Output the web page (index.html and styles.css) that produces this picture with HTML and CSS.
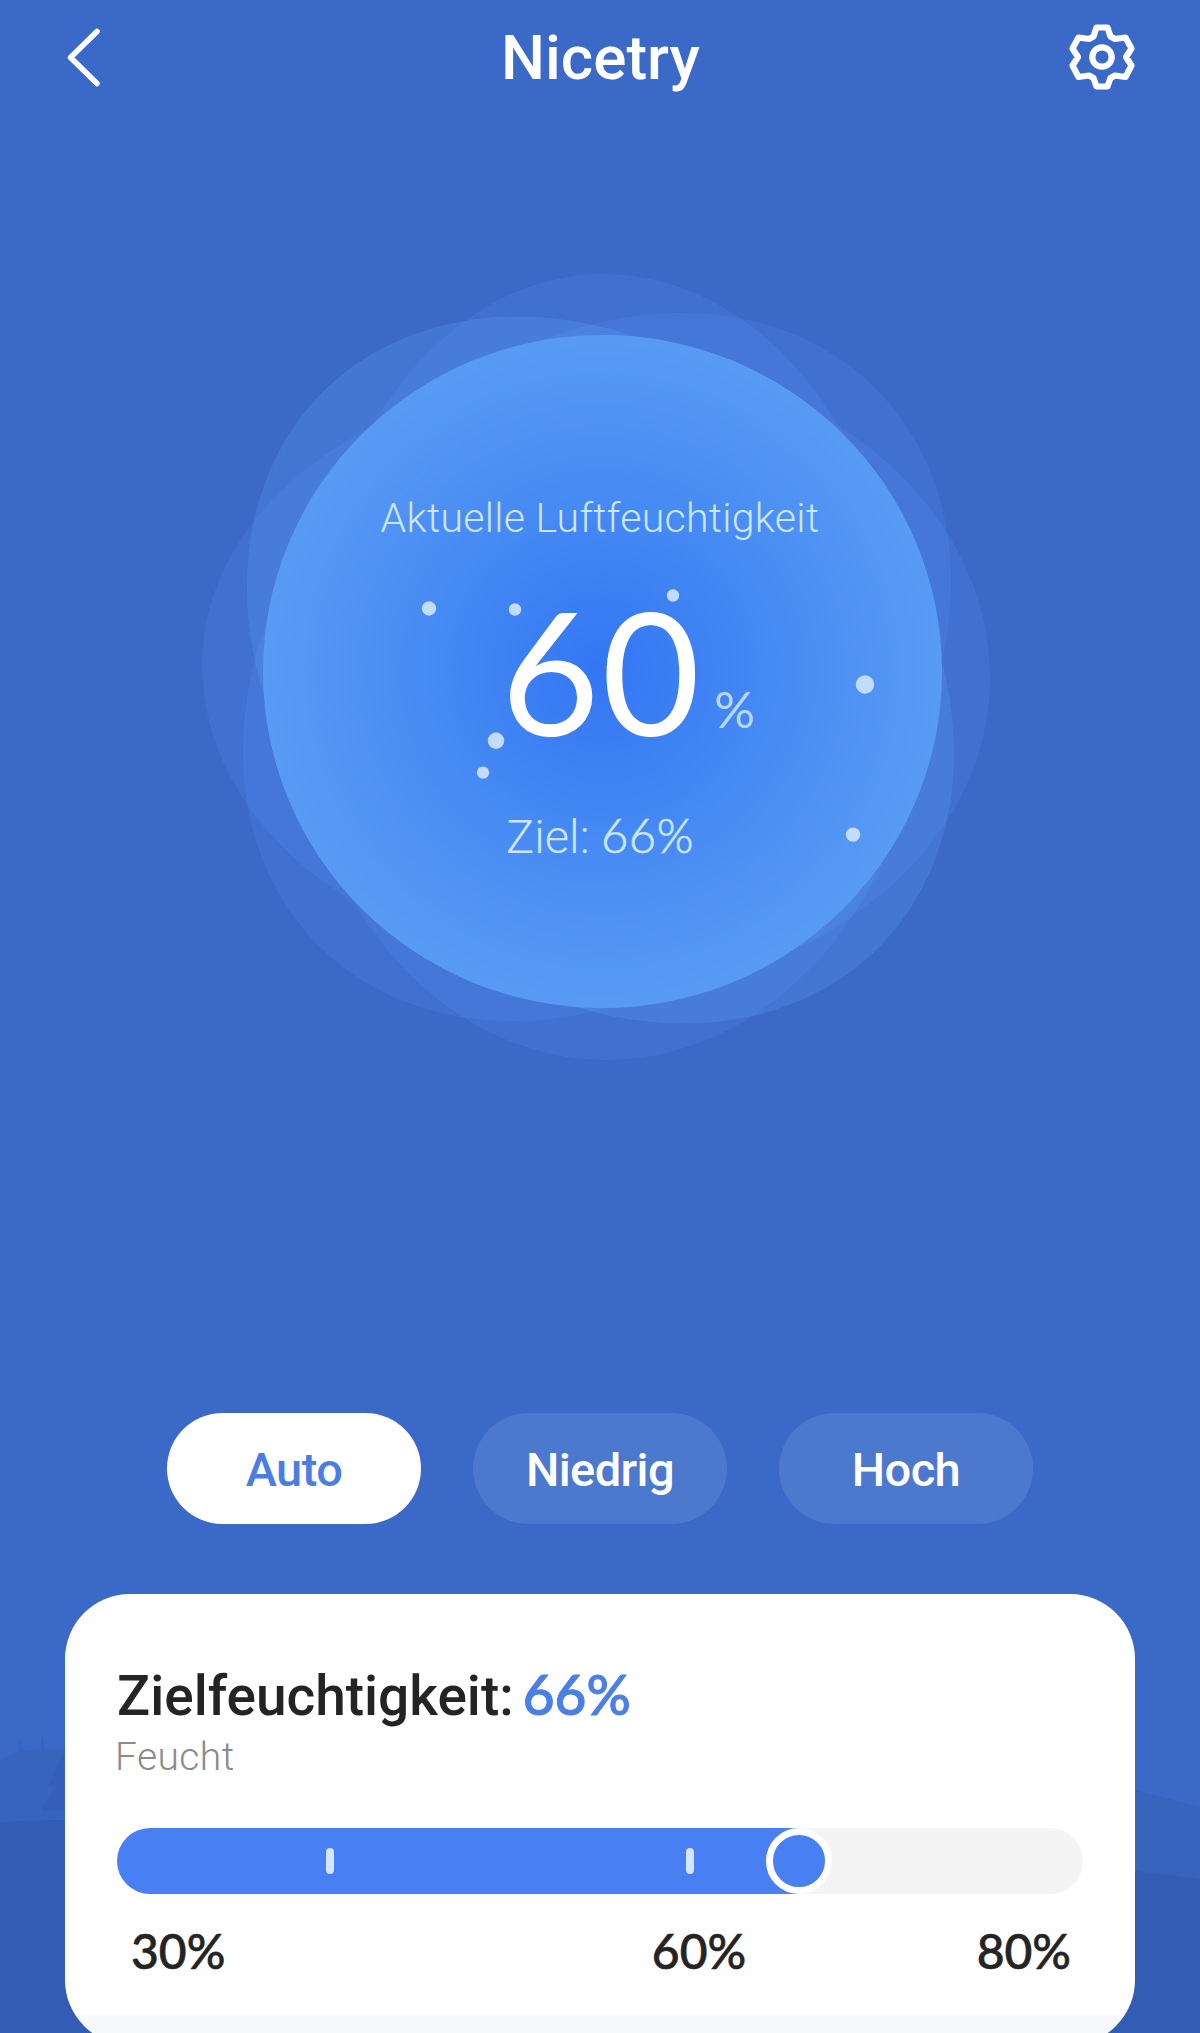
FILE: index.html
```html
<!DOCTYPE html>
<html lang="de">
<head>
<meta charset="utf-8">
<title>Nicetry</title>
<link rel="stylesheet" href="styles.css">
</head>
<body>
<div class="screen">
  <svg class="scenery" viewBox="0 0 1200 320" aria-hidden="true">
    <path fill="#3864be" d="M0 47Q16 40 18 39L20 25L23 38L40 36L42 20L45 36Q70 34 110 42L1100 68L1135 77L1200 94V320H0Z"/>
    <path fill="#355fb8" d="M41 98L54 74H48L60 48L68 30V98Z"/>
    <path fill="#335cb4" d="M0 109Q30 107 65 107L1135 158L1200 166V320H0Z"/>
  </svg>

  <header class="topbar">
    <svg class="back" viewBox="0 0 40 64" aria-label="Zurück"><path d="M36 6.500L9.500 32.500L36 58.500"/></svg>
    <h1 class="title">Nicetry</h1>
    <svg class="gear" viewBox="0 0 72 72" aria-label="Einstellungen">
      <path d="M30.500 6.500H41.500L44.500 15.500L49 18L59.500 16.500L65.500 27.500L60 36L65.500 44.500L59.500 56L49 54.500L44.500 57L41.500 65.500H30.500L27.500 57L23 54.500L12.500 56L6.500 44.500L12 36L6.500 27.500L12.500 16.500L23 18L27.500 15.500Z"/>
      <circle cx="36" cy="36" r="9.700"/>
    </svg>
  </header>

  <section class="dial">
    <svg class="bubble" viewBox="190 260 820 820" aria-hidden="true">
      <defs>
        <radialGradient id="core" gradientUnits="userSpaceOnUse" cx="602" cy="671" r="340">
          <stop offset="0" stop-color="#3376f3"/>
          <stop offset=".5" stop-color="#468af3"/>
          <stop offset="1" stop-color="#589bf4"/>
        </radialGradient>
      </defs>
      <g class="petal">
        <path d="M311 667A292 393 0 0 1 603 274A298 393 0 0 1 901 667H925A319 393 0 0 1 606 1060A315 393 0 0 1 291 667Z"/>
        <path d="M202 664A394 288 0 0 1 596 376V358A394 320 0 0 1 990 678A394 314 0 0 1 596 992V966A394 302 0 0 1 202 664Z"/>
        <ellipse cx="597" cy="667" rx="394" ry="309" transform="rotate(-45 597 667)"/>
      </g>
      <ellipse class="petal-bright" cx="600.500" cy="670" rx="393" ry="309" transform="rotate(45 600.500 670)"/>
      <ellipse cx="602.500" cy="671.500" rx="339.500" ry="336.500" fill="url(#core)"/>
      <g class="drops">
        <circle cx="429" cy="608.500" r="7.200"/><circle cx="515" cy="609.500" r="6.200"/>
        <circle cx="673" cy="595.500" r="6.200"/><circle cx="496" cy="740.700" r="8.200"/>
        <circle cx="483" cy="772.600" r="6.200"/><circle cx="865" cy="684.500" r="9.200"/>
        <circle cx="853" cy="834.600" r="7.200"/>
      </g>
    </svg>
    <p class="caption">Aktuelle Luftfeuchtigkeit</p>
    <p class="reading"><span class="value">60</span><span class="unit">%</span></p>
    <p class="goal">Ziel: <span class="num">66%</span></p>
  </section>

  <nav class="modes">
    <button class="mode active">Auto</button>
    <button class="mode">Niedrig</button>
    <button class="mode">Hoch</button>
  </nav>

  <section class="card">
    <h2 class="target"><span class="label">Zielfeuchtigkeit:</span><span class="percent">66%</span></h2>
    <p class="state">Feucht</p>
    <div class="slider">
      <div class="fill"></div>
      <i class="tick tick-low"></i><i class="tick tick-high"></i>
      <div class="knob"></div>
    </div>
    <div class="scale"><span>30%</span><span class="mid">60%</span><span>80%</span></div>
  </section>
</div>
</body>
</html>
```
FILE: styles.css
```css
* { box-sizing: border-box; }
body, h1, h2, p { margin: 0; }

.screen {
  position: relative;
  height: 2033px;
  overflow: hidden;
  display: flex;
  flex-direction: column;
  background: #3b69c8;
  font-family: Roboto, sans-serif;
}
.screen > * { flex: none; }
.scenery { position: absolute; left: 0; bottom: 0; width: 1200px; height: 320px; }

.topbar {
  display: flex;
  justify-content: space-between;
  align-items: center;
  height: 114px;
  padding: 0 62px 0 61px;
}
.back, .gear { fill: none; stroke: #fff; stroke-linejoin: round; stroke-linecap: round; }
.back { width: 40px; height: 64px; stroke-width: 5.5; }
.gear { width: 72px; height: 72px; stroke-width: 6.2; }
.title { margin-left: 34px; padding-top: 2px; color: #fff; font-size: 62px; line-height: 90px; font-weight: 500; }

.dial {
  position: relative;
  height: 1299px;
  padding-top: 374px;
  text-align: center;
  color: #cde6ff;
}
.bubble { position: absolute; left: 190px; top: 146px; width: 820px; height: 820px; }
.petal { fill: rgba(89, 148, 247, .18); }
.petal-bright { fill: rgba(104, 170, 255, .2); }
.drops { fill: #c3dcfb; }
.caption, .reading, .goal { position: relative; }
.caption { font-size: 41px; line-height: 60px; font-weight: 350; letter-spacing: .3px; }
.reading {
  display: flex;
  align-items: baseline;
  height: 220px;
  margin-top: 12px;
  padding-left: 501px;
  font-family: Lato, sans-serif;
  line-height: 220px;
}
.value { font-size: 170px; letter-spacing: 2px; color: #fff; }
.unit { font-size: 51px; margin: 0 0 9px 12px; color: #b9d6fd; align-self: flex-end; line-height: 125px; }
.goal { margin-top: 20px; font-size: 47px; line-height: 70px; font-weight: 350; }
.num { font-family: Lato, sans-serif; font-weight: 300; letter-spacing: .6px; -webkit-text-stroke: .7px; }

.modes { display: flex; justify-content: center; gap: 52px; height: 111px; position: relative; }
.mode {
  width: 254px;
  border: 0;
  border-radius: 56px;
  padding: 2px 0 0;
  background: #4c78cd;
  color: #fff;
  font: 500 47px Roboto, sans-serif;
  letter-spacing: -.6px;
}
.mode.active { background: #fff; color: #4a7ee4; }

.card {
  position: relative;
  width: 1070px;
  height: 451px;
  margin: 70px auto 0;
  padding: 64px 52px 0;
  border-radius: 65px;
  background: linear-gradient(#fff 421px, #f9fafc 421px, #f4f6fa);
  color: #242424;
}
.target { display: flex; align-items: baseline; font-size: 55px; line-height: 72px; font-weight: 500; }
.percent { margin-left: 9px; font-family: Lato, sans-serif; color: #4a7fe6; -webkit-text-stroke: 1px; }
.state { margin-left: -2px; font-size: 39px; line-height: 50px; font-weight: 350; letter-spacing: .4px; color: #8b8b8b; }
.slider { position: relative; height: 66px; margin-top: 46px; border-radius: 33px; background: #f4f4f4; }
.fill { width: 681px; height: 66px; border-radius: 33px 0 0 33px; background: #487ff3; }
.tick { position: absolute; top: 20px; width: 8px; height: 26px; border-radius: 4px; background: #d5e5ff; }
.tick-low { left: 209px; }
.tick-high { left: 569px; }
.knob {
  position: absolute; left: 649px; top: 0; width: 66px; height: 66px;
  border: 7px solid #fff; border-radius: 50%; background: #487ff3;
}
.scale {
  display: flex; justify-content: space-between; padding: 0 12px 0 14px; margin-top: 27px;
  font: 500 48px/60px Lato, sans-serif;
  -webkit-text-stroke: .6px;
}
.mid { margin-left: 196px; }
```
